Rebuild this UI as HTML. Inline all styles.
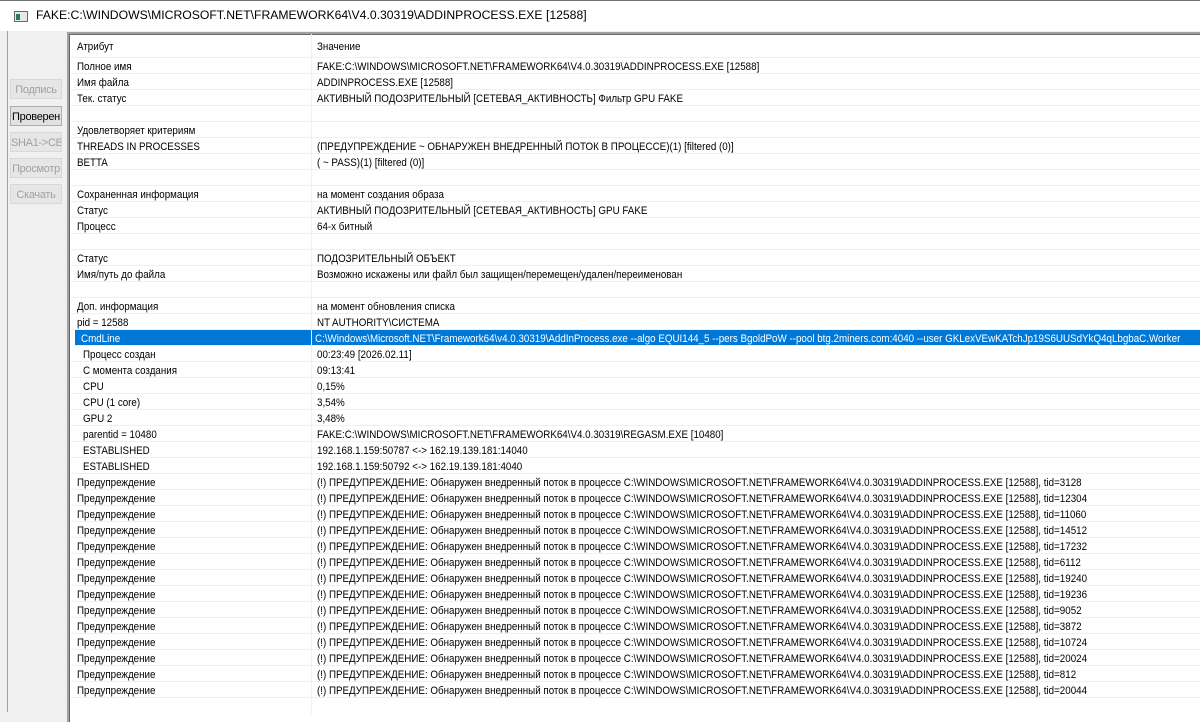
<!DOCTYPE html>
<html><head><meta charset="utf-8"><style>
*{margin:0;padding:0;box-sizing:border-box}
body{width:1200px;height:712px;overflow:hidden;background:#f0f0f0;font-family:"Liberation Sans",sans-serif;font-size:11px;color:#000;position:relative}
.title{position:absolute;left:0;top:0;width:1200px;height:31px;background:#fff;border-top:1px solid #707070}
.title .t{position:absolute;left:36px;top:7px;font-size:12.2px;color:#000}
.ico{position:absolute;left:14px;top:10px;width:14px;height:11px;border:1px solid #6a6a6a;background:#e8e8e8}
.ico:before{content:"";position:absolute;left:1px;top:2px;width:4px;height:6px;background:#2a7a6a}
.left{position:absolute;left:0;top:31px;width:8px;height:681px;background:#f0f0f0;border-right:1px solid #a0a0a0}
.btn{position:absolute;left:10px;width:52px;height:20px;background:#e6e6e6;color:#a0a0a0;font-size:11px;text-align:center;line-height:20px;border:1px solid #d8d8d8;white-space:nowrap;overflow:hidden;letter-spacing:-0.3px}
.btn.on{color:#000;border:1px solid #adadad;background:#e1e1e1}
.tbl{position:absolute;left:67px;top:32px;width:1133px;height:690px;background:#fff;border-left:2px solid #a0a0a0;border-top:2px solid #a0a0a0;box-shadow:inset 1px 1px 0 #696969;overflow:hidden}
.row{position:absolute;left:2px;width:1131px;height:16px;border-bottom:1px solid #f0f0f0;white-space:nowrap}
.row span{position:absolute;top:2px;line-height:14px;transform:scaleX(0.89);transform-origin:0 0}
.a{left:6px}.b{left:246px}
.sub .a{left:12px}
.sel{background:#0078d7;color:#fff;left:6px}
.div{position:absolute;left:311px;top:34px;width:1px;height:680px;background:#f0f0f0}
</style></head><body>
<div class="title"><div class="ico"></div><div class="t">FAKE:C:\WINDOWS\MICROSOFT.NET\FRAMEWORK64\V4.0.30319\ADDINPROCESS.EXE [12588]</div></div>
<div class="left"></div>
<div class="btn" style="top:79px">Подпись</div>
<div class="btn on" style="top:106px">Проверен</div>
<div class="btn" style="top:132px">SHA1-&gt;CB</div>
<div class="btn" style="top:158px">Просмотр</div>
<div class="btn" style="top:184px">Скачать</div>
<div class="tbl">
<div class="row" style="top:2px;height:22px"><span class="a" style="top:4px">Атрибут</span><span class="b" style="top:4px">Значение</span></div>
<div class="row" style="top:24px"><span class="a">Полное имя</span><span class="b">FAKE:C:\WINDOWS\MICROSOFT.NET\FRAMEWORK64\V4.0.30319\ADDINPROCESS.EXE [12588]</span></div>
<div class="row" style="top:40px"><span class="a">Имя файла</span><span class="b">ADDINPROCESS.EXE [12588]</span></div>
<div class="row" style="top:56px"><span class="a">Тек. статус</span><span class="b">АКТИВНЫЙ ПОДОЗРИТЕЛЬНЫЙ [СЕТЕВАЯ_АКТИВНОСТЬ] Фильтр GPU FAKE</span></div>
<div class="row" style="top:72px"></div>
<div class="row" style="top:88px"><span class="a">Удовлетворяет критериям</span></div>
<div class="row" style="top:104px"><span class="a">THREADS IN PROCESSES</span><span class="b">(ПРЕДУПРЕЖДЕНИЕ ~ ОБНАРУЖЕН ВНЕДРЕННЫЙ ПОТОК В ПРОЦЕССЕ)(1) [filtered (0)]</span></div>
<div class="row" style="top:120px"><span class="a">BETTA</span><span class="b">( ~ PASS)(1) [filtered (0)]</span></div>
<div class="row" style="top:136px"></div>
<div class="row" style="top:152px"><span class="a">Сохраненная информация</span><span class="b">на момент создания образа</span></div>
<div class="row" style="top:168px"><span class="a">Статус</span><span class="b">АКТИВНЫЙ ПОДОЗРИТЕЛЬНЫЙ [СЕТЕВАЯ_АКТИВНОСТЬ] GPU FAKE</span></div>
<div class="row" style="top:184px"><span class="a">Процесс</span><span class="b">64-х битный</span></div>
<div class="row" style="top:200px"></div>
<div class="row" style="top:216px"><span class="a">Статус</span><span class="b">ПОДОЗРИТЕЛЬНЫЙ ОБЪЕКТ</span></div>
<div class="row" style="top:232px"><span class="a">Имя/путь до файла</span><span class="b">Возможно искажены или файл был защищен/перемещен/удален/переименован</span></div>
<div class="row" style="top:248px"></div>
<div class="row" style="top:264px"><span class="a">Доп. информация</span><span class="b">на момент обновления списка</span></div>
<div class="row" style="top:280px"><span class="a">pid = 12588</span><span class="b">NT AUTHORITY\СИСТЕМА</span></div>
<div class="row sub sel" style="top:296px;width:1125px"><span class="a" style="left:6px">CmdLine</span><span class="b" style="left:240px">C:\Windows\Microsoft.NET\Framework64\v4.0.30319\AddInProcess.exe --algo EQUI144_5 --pers BgoldPoW --pool btg.2miners.com:4040 --user GKLexVEwKATchJp19S6UUSdYkQ4qLbgbaC.Worker</span></div>
<div class="row sub" style="top:312px"><span class="a">Процесс создан</span><span class="b">00:23:49 [2026.02.11]</span></div>
<div class="row sub" style="top:328px"><span class="a">С момента создания</span><span class="b">09:13:41</span></div>
<div class="row sub" style="top:344px"><span class="a">CPU</span><span class="b">0,15%</span></div>
<div class="row sub" style="top:360px"><span class="a">CPU (1 core)</span><span class="b">3,54%</span></div>
<div class="row sub" style="top:376px"><span class="a">GPU 2</span><span class="b">3,48%</span></div>
<div class="row sub" style="top:392px"><span class="a">parentid = 10480</span><span class="b">FAKE:C:\WINDOWS\MICROSOFT.NET\FRAMEWORK64\V4.0.30319\REGASM.EXE [10480]</span></div>
<div class="row sub" style="top:408px"><span class="a">ESTABLISHED</span><span class="b">192.168.1.159:50787 &lt;-&gt; 162.19.139.181:14040</span></div>
<div class="row sub" style="top:424px"><span class="a">ESTABLISHED</span><span class="b">192.168.1.159:50792 &lt;-&gt; 162.19.139.181:4040</span></div>
<div class="row" style="top:440px"><span class="a">Предупреждение</span><span class="b">(!) ПРЕДУПРЕЖДЕНИЕ: Обнаружен внедренный поток в процессе C:\WINDOWS\MICROSOFT.NET\FRAMEWORK64\V4.0.30319\ADDINPROCESS.EXE [12588], tid=3128</span></div>
<div class="row" style="top:456px"><span class="a">Предупреждение</span><span class="b">(!) ПРЕДУПРЕЖДЕНИЕ: Обнаружен внедренный поток в процессе C:\WINDOWS\MICROSOFT.NET\FRAMEWORK64\V4.0.30319\ADDINPROCESS.EXE [12588], tid=12304</span></div>
<div class="row" style="top:472px"><span class="a">Предупреждение</span><span class="b">(!) ПРЕДУПРЕЖДЕНИЕ: Обнаружен внедренный поток в процессе C:\WINDOWS\MICROSOFT.NET\FRAMEWORK64\V4.0.30319\ADDINPROCESS.EXE [12588], tid=11060</span></div>
<div class="row" style="top:488px"><span class="a">Предупреждение</span><span class="b">(!) ПРЕДУПРЕЖДЕНИЕ: Обнаружен внедренный поток в процессе C:\WINDOWS\MICROSOFT.NET\FRAMEWORK64\V4.0.30319\ADDINPROCESS.EXE [12588], tid=14512</span></div>
<div class="row" style="top:504px"><span class="a">Предупреждение</span><span class="b">(!) ПРЕДУПРЕЖДЕНИЕ: Обнаружен внедренный поток в процессе C:\WINDOWS\MICROSOFT.NET\FRAMEWORK64\V4.0.30319\ADDINPROCESS.EXE [12588], tid=17232</span></div>
<div class="row" style="top:520px"><span class="a">Предупреждение</span><span class="b">(!) ПРЕДУПРЕЖДЕНИЕ: Обнаружен внедренный поток в процессе C:\WINDOWS\MICROSOFT.NET\FRAMEWORK64\V4.0.30319\ADDINPROCESS.EXE [12588], tid=6112</span></div>
<div class="row" style="top:536px"><span class="a">Предупреждение</span><span class="b">(!) ПРЕДУПРЕЖДЕНИЕ: Обнаружен внедренный поток в процессе C:\WINDOWS\MICROSOFT.NET\FRAMEWORK64\V4.0.30319\ADDINPROCESS.EXE [12588], tid=19240</span></div>
<div class="row" style="top:552px"><span class="a">Предупреждение</span><span class="b">(!) ПРЕДУПРЕЖДЕНИЕ: Обнаружен внедренный поток в процессе C:\WINDOWS\MICROSOFT.NET\FRAMEWORK64\V4.0.30319\ADDINPROCESS.EXE [12588], tid=19236</span></div>
<div class="row" style="top:568px"><span class="a">Предупреждение</span><span class="b">(!) ПРЕДУПРЕЖДЕНИЕ: Обнаружен внедренный поток в процессе C:\WINDOWS\MICROSOFT.NET\FRAMEWORK64\V4.0.30319\ADDINPROCESS.EXE [12588], tid=9052</span></div>
<div class="row" style="top:584px"><span class="a">Предупреждение</span><span class="b">(!) ПРЕДУПРЕЖДЕНИЕ: Обнаружен внедренный поток в процессе C:\WINDOWS\MICROSOFT.NET\FRAMEWORK64\V4.0.30319\ADDINPROCESS.EXE [12588], tid=3872</span></div>
<div class="row" style="top:600px"><span class="a">Предупреждение</span><span class="b">(!) ПРЕДУПРЕЖДЕНИЕ: Обнаружен внедренный поток в процессе C:\WINDOWS\MICROSOFT.NET\FRAMEWORK64\V4.0.30319\ADDINPROCESS.EXE [12588], tid=10724</span></div>
<div class="row" style="top:616px"><span class="a">Предупреждение</span><span class="b">(!) ПРЕДУПРЕЖДЕНИЕ: Обнаружен внедренный поток в процессе C:\WINDOWS\MICROSOFT.NET\FRAMEWORK64\V4.0.30319\ADDINPROCESS.EXE [12588], tid=20024</span></div>
<div class="row" style="top:632px"><span class="a">Предупреждение</span><span class="b">(!) ПРЕДУПРЕЖДЕНИЕ: Обнаружен внедренный поток в процессе C:\WINDOWS\MICROSOFT.NET\FRAMEWORK64\V4.0.30319\ADDINPROCESS.EXE [12588], tid=812</span></div>
<div class="row" style="top:648px"><span class="a">Предупреждение</span><span class="b">(!) ПРЕДУПРЕЖДЕНИЕ: Обнаружен внедренный поток в процессе C:\WINDOWS\MICROSOFT.NET\FRAMEWORK64\V4.0.30319\ADDINPROCESS.EXE [12588], tid=20044</span></div>
</div>
<div class="div"></div>
</body></html>
